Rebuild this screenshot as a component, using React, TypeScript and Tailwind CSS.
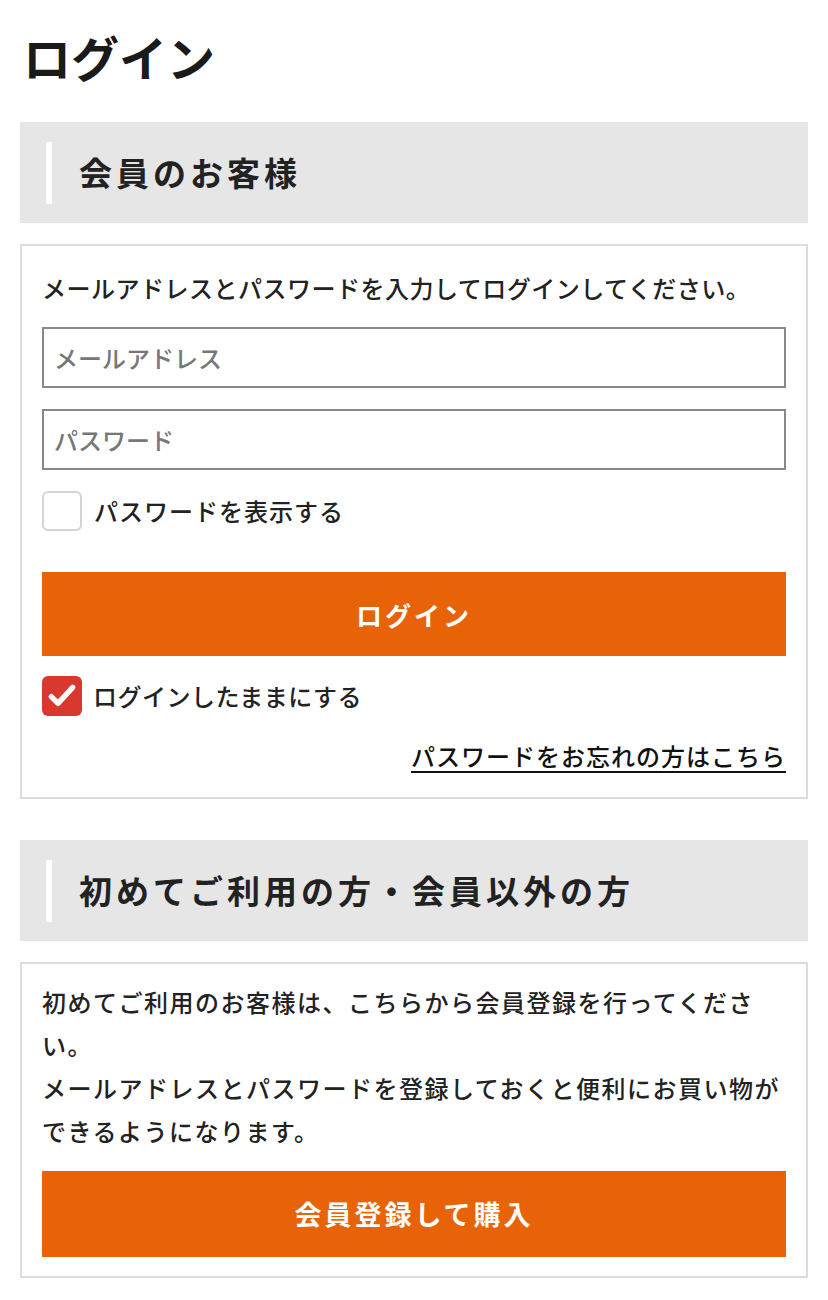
const SectionHeader = ({ title }: { title: string }) => {
  return (
    <div className="flex h-[101px] items-center bg-[#e6e6e6] pl-[26px]">
      <div className="h-[62px] w-[6px] bg-white" />
      <h2 className="ml-[27px] text-[33px] font-bold leading-none tracking-[4px] text-[#222]">
        {title}
      </h2>
    </div>
  );
};

const App = () => {
  return (
    <div className="min-h-screen bg-white px-5 pb-5 pt-[27px] font-['Noto_Sans_CJK_JP','Noto_Sans_CJK_SC',sans-serif] font-medium text-[#222]">
      <h1 className="mb-[37px] pl-[3px] text-[48px] font-bold leading-[58px] text-[#1a1a1a]">ログイン</h1>

      <SectionHeader title="会員のお客様" />
      <div className="mt-[21px] border-2 border-[#dcdcdc] px-5 pb-5 pt-5">
        <p className="text-[24px] leading-[43px] tracking-[0.5px]">
          メールアドレスとパスワードを入力してログインしてください。
        </p>
        <input
          type="email"
          placeholder="メールアドレス"
          className="mt-[18px] block h-[61px] w-full border-2 border-[#888] px-[10px] text-[24px] outline-none placeholder:text-[#777]"
        />
        <input
          type="password"
          placeholder="パスワード"
          className="mt-[21px] block h-[61px] w-full border-2 border-[#888] px-[10px] text-[24px] outline-none placeholder:text-[#777]"
        />
        <label className="mt-[21px] flex items-center gap-3">
          <span className="h-10 w-10 rounded-md border-2 border-[#d4d4d4] bg-white" />
          <span className="text-[24px] leading-10 tracking-[1px]">パスワードを表示する</span>
        </label>
        <button className="mt-[41px] block h-[84px] w-full bg-[#e86308] text-[26px] font-bold tracking-[3px] text-white">
          ログイン
        </button>
        <label className="mt-5 flex items-center gap-[11px]">
          <span className="flex h-10 w-10 items-center justify-center rounded-md bg-[#d9382f]">
            <svg viewBox="0 0 24 24" className="h-8 w-8" fill="none">
              <path d="M4 12.5l5 5L20 5.5" stroke="white" strokeWidth="4" strokeLinecap="round" strokeLinejoin="round" />
            </svg>
          </span>
          <span className="text-[24px] leading-10 tracking-[0.5px]">ログインしたままにする</span>
        </label>
        <div className="mt-[18px] text-right">
          <a href="#" className="text-[24px] leading-[43px] tracking-[1px] text-[#111] underline underline-offset-[5px]">
            パスワードをお忘れの方はこちら
          </a>
        </div>
      </div>

      <div className="mt-[41px]">
        <SectionHeader title="初めてご利用の方・会員以外の方" />
      </div>
      <div className="mt-[21px] border-2 border-[#dcdcdc] px-5 pb-[19px] pt-4">
        <p className="text-[24px] leading-[43px] tracking-[1.5px]">
          初めてご利用のお客様は、こちらから会員登録を行ってください。
          <br />
          メールアドレスとパスワードを登録しておくと便利にお買い物ができるようになります。
        </p>
        <button className="mt-[19px] block h-[86px] w-full bg-[#e86308] text-[27px] font-bold tracking-[3px] text-white">
          会員登録して購入
        </button>
      </div>
    </div>
  );
};

export default App;
